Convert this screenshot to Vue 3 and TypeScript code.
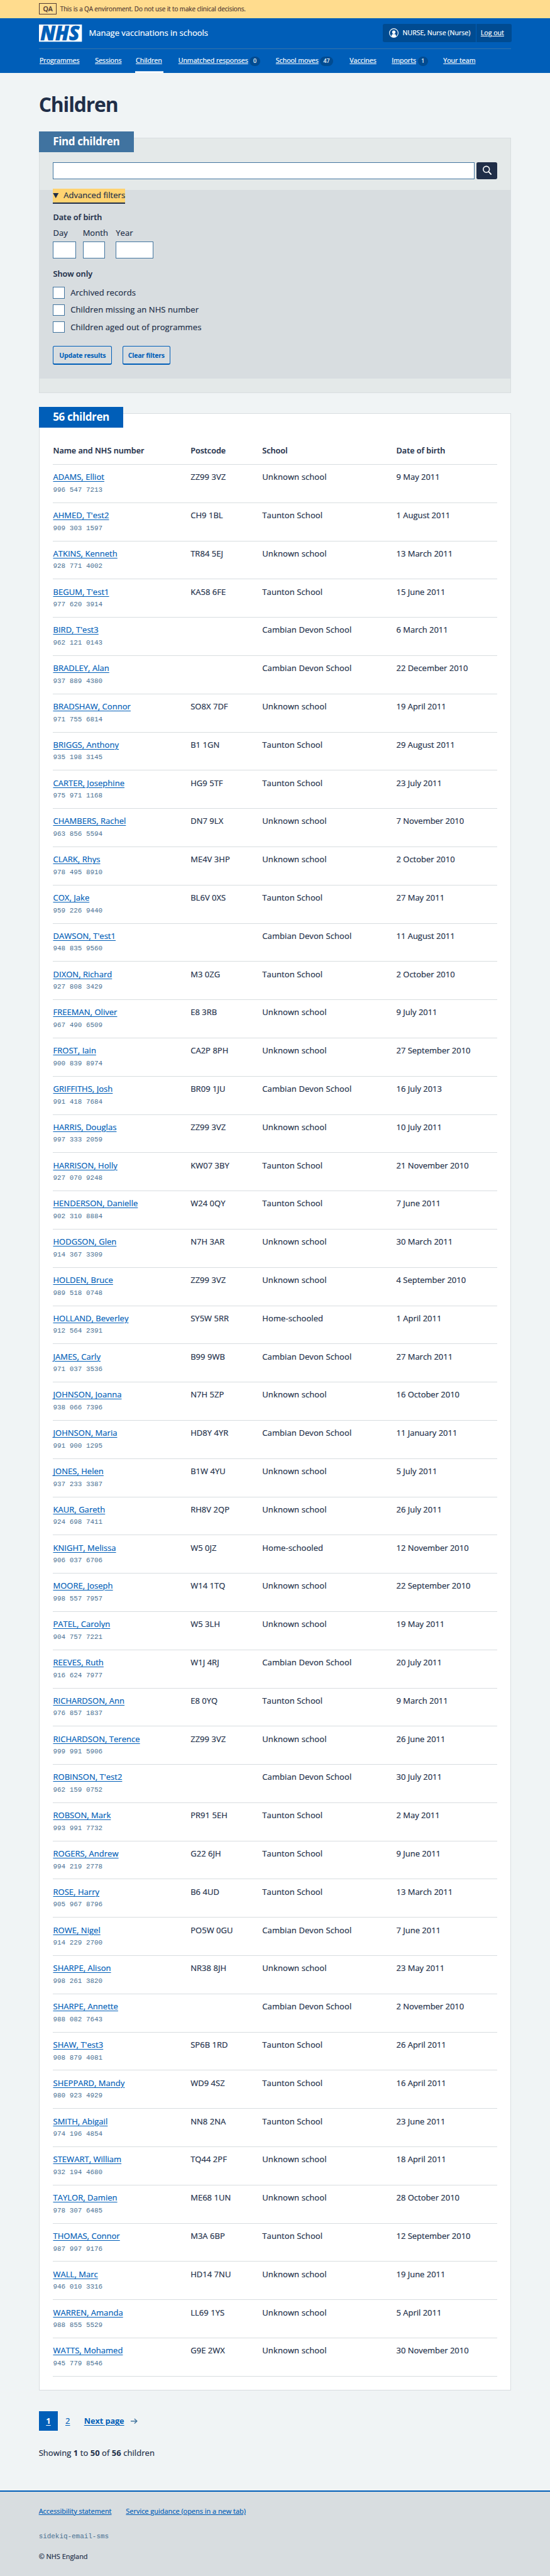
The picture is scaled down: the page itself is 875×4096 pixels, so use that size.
<script setup lang="ts">
interface NavItem { label: string; count?: number; active?: boolean }
interface Child { name: string; nhs: string; postcode: string; school: string; dob: string }

const nav: NavItem[] = [
  { label: 'Programmes' },
  { label: 'Sessions' },
  { label: 'Children', active: true },
  { label: 'Unmatched responses', count: 0 },
  { label: 'School moves', count: 47 },
  { label: 'Vaccines' },
  { label: 'Imports', count: 1 },
  { label: 'Your team' },
]

const filters = ['Archived records', 'Children missing an NHS number', 'Children aged out of programmes']
const columns = ['Name and NHS number', 'Postcode', 'School', 'Date of birth']

const schools: Record<string, string> = {
  U: 'Unknown school',
  T: 'Taunton School',
  C: 'Cambian Devon School',
  H: 'Home-schooled',
}

const records = `ADAMS, Elliot|996 547 7213|ZZ99 3VZ|U|9 May 2011
AHMED, T'est2|909 303 1597|CH9 1BL|T|1 August 2011
ATKINS, Kenneth|928 771 4002|TR84 5EJ|U|13 March 2011
BEGUM, T'est1|977 620 3914|KA58 6FE|T|15 June 2011
BIRD, T'est3|962 121 0143||C|6 March 2011
BRADLEY, Alan|937 889 4380||C|22 December 2010
BRADSHAW, Connor|971 755 6814|SO8X 7DF|U|19 April 2011
BRIGGS, Anthony|935 198 3145|B1 1GN|T|29 August 2011
CARTER, Josephine|975 971 1168|HG9 5TF|T|23 July 2011
CHAMBERS, Rachel|963 856 5594|DN7 9LX|U|7 November 2010
CLARK, Rhys|978 495 8910|ME4V 3HP|U|2 October 2010
COX, Jake|959 226 9440|BL6V 0XS|T|27 May 2011
DAWSON, T'est1|948 835 9560||C|11 August 2011
DIXON, Richard|927 808 3429|M3 0ZG|T|2 October 2010
FREEMAN, Oliver|967 490 6509|E8 3RB|U|9 July 2011
FROST, Iain|900 839 8974|CA2P 8PH|U|27 September 2010
GRIFFITHS, Josh|991 418 7684|BR09 1JU|C|16 July 2013
HARRIS, Douglas|997 333 2059|ZZ99 3VZ|U|10 July 2011
HARRISON, Holly|927 070 9248|KW07 3BY|T|21 November 2010
HENDERSON, Danielle|902 310 8884|W24 0QY|T|7 June 2011
HODGSON, Glen|914 367 3309|N7H 3AR|U|30 March 2011
HOLDEN, Bruce|989 518 0748|ZZ99 3VZ|U|4 September 2010
HOLLAND, Beverley|912 564 2391|SY5W 5RR|H|1 April 2011
JAMES, Carly|971 037 3536|B99 9WB|C|27 March 2011
JOHNSON, Joanna|938 066 7396|N7H 5ZP|U|16 October 2010
JOHNSON, Maria|991 900 1295|HD8Y 4YR|C|11 January 2011
JONES, Helen|937 233 3387|B1W 4YU|U|5 July 2011
KAUR, Gareth|924 698 7411|RH8V 2QP|U|26 July 2011
KNIGHT, Melissa|906 037 6706|W5 0JZ|H|12 November 2010
MOORE, Joseph|998 557 7957|W14 1TQ|U|22 September 2010
PATEL, Carolyn|904 757 7221|W5 3LH|U|19 May 2011
REEVES, Ruth|916 624 7977|W1J 4RJ|C|20 July 2011
RICHARDSON, Ann|976 857 1837|E8 0YQ|T|9 March 2011
RICHARDSON, Terence|999 991 5906|ZZ99 3VZ|U|26 June 2011
ROBINSON, T'est2|962 159 0752||C|30 July 2011
ROBSON, Mark|993 991 7732|PR91 5EH|T|2 May 2011
ROGERS, Andrew|994 219 2778|G22 6JH|T|9 June 2011
ROSE, Harry|905 967 8796|B6 4UD|T|13 March 2011
ROWE, Nigel|914 229 2700|PO5W 0GU|C|7 June 2011
SHARPE, Alison|998 261 3820|NR38 8JH|U|23 May 2011
SHARPE, Annette|988 082 7643||C|2 November 2010
SHAW, T'est3|908 879 4081|SP6B 1RD|T|26 April 2011
SHEPPARD, Mandy|980 923 4929|WD9 4SZ|T|16 April 2011
SMITH, Abigail|974 196 4854|NN8 2NA|T|23 June 2011
STEWART, William|932 194 4680|TQ44 2PF|U|18 April 2011
TAYLOR, Damien|978 307 6485|ME68 1UN|U|28 October 2010
THOMAS, Connor|987 997 9176|M3A 6BP|T|12 September 2010
WALL, Marc|946 010 3316|HD14 7NU|U|19 June 2011
WARREN, Amanda|988 855 5529|LL69 1YS|U|5 April 2011
WATTS, Mohamed|945 779 8546|G9E 2WX|U|30 November 2010`

const children: Child[] = records.split('\n').map((line) => {
  const [name, nhs, postcode, school, dob] = line.split('|')
  return { name, nhs, postcode, school: schools[school], dob }
})
</script>

<template>
  <div class="page">
    <div class="env">
      <div class="wrap env-row">
        <strong class="env-tag">QA</strong>
        <span>This is a QA environment. Do not use it to make clinical decisions.</span>
      </div>
    </div>

    <header class="header">
      <div class="wrap">
        <div class="brand">
          <svg class="logo" viewBox="0 0 100 40" role="img" aria-label="NHS">
            <rect width="100" height="40" fill="#fff" />
            <text class="logo-text" x="3.2" y="36.6" textLength="91" lengthAdjust="spacingAndGlyphs">NHS</text>
          </svg>
          <span class="service">Manage vaccinations in schools</span>
          <div class="account">
            <span class="account-user">
              <svg class="user-icon" viewBox="0 0 22 22" aria-hidden="true">
                <circle cx="11" cy="11" r="10.1" fill="none" stroke="#fff" stroke-width="1.7" />
                <rect x="7.1" y="5" width="7.8" height="8" rx="3.5" fill="#fff" />
                <path d="M6 19.6v-3.2q0-2.8 2.8-2.8h4.4q2.8 0 2.8 2.8v3.2q-5 2.4-10 0z" fill="#fff" />
              </svg>
              NURSE, Nurse (Nurse)
            </span>
            <a class="account-out" href="#">Log out</a>
          </div>
        </div>
        <nav class="nav">
          <div v-for="item in nav" :key="item.label" class="nav-item" :class="{ active: item.active }">
            <a href="#">{{ item.label }}</a>
            <span v-if="item.count !== undefined" class="badge">{{ item.count }}</span>
          </div>
        </nav>
      </div>
    </header>

    <main class="wrap">
      <h1>Children</h1>

      <section class="card find">
        <h2 class="tab tab-find">Find children</h2>
        <div class="search">
          <input class="search-input" type="text" aria-label="Search" />
          <button class="search-button" type="button" aria-label="Search">
            <svg viewBox="0 0 48 40" aria-hidden="true">
              <circle cx="23" cy="16.5" r="7.2" fill="none" stroke="#fff" stroke-width="2.3" />
              <path d="M28.2 21.9l5.6 5.9" fill="none" stroke="#fff" stroke-width="2.7" stroke-linecap="round" />
            </svg>
          </button>
        </div>
        <div class="panel">
          <div class="summary">
            <svg viewBox="0 0 14 12" aria-hidden="true"><path d="M.4 0h13.2L7 12z" fill="#202e48" /></svg>
            <span>Advanced filters</span>
          </div>
          <h3 class="legend legend-dob">Date of birth</h3>
          <div class="dates">
            <label>Day<input class="in-day" type="text" /></label>
            <label>Month<input class="in-month" type="text" /></label>
            <label>Year<input class="in-year" type="text" /></label>
          </div>
          <h3 class="legend legend-show">Show only</h3>
          <div class="checks">
            <label v-for="f in filters" :key="f" class="check"><span class="box"></span>{{ f }}</label>
          </div>
          <div class="buttons">
            <button class="btn btn-update" type="button">Update results</button>
            <button class="btn btn-clear" type="button">Clear filters</button>
          </div>
        </div>
      </section>

      <section class="card list">
        <h2 class="tab tab-list">56 children</h2>
        <div class="table" role="table">
          <div class="row head" role="row">
            <span v-for="c in columns" :key="c" role="columnheader">{{ c }}</span>
          </div>
          <div v-for="c in children" :key="c.nhs" class="row body" role="row">
            <div role="cell"><a href="#">{{ c.name }}</a><span class="nhs">{{ c.nhs }}</span></div>
            <div role="cell">{{ c.postcode }}</div>
            <div class="school" role="cell">{{ c.school }}</div>
            <div class="dob" role="cell">{{ c.dob }}</div>
          </div>
        </div>
      </section>

      <nav class="pages">
        <a class="page-link current" href="#">1</a>
        <a class="page-link" href="#">2</a>
        <a class="next" href="#">Next page</a>
        <svg class="arrow" viewBox="0 0 16 14" aria-hidden="true">
          <path d="M0 7h14M8.6 1.4L14.4 7l-5.8 5.6" fill="none" stroke="#41749e" stroke-width="2.1" />
        </svg>
      </nav>
      <p class="showing">Showing <b>1</b> to <b>50</b> of <b>56</b> children</p>
    </main>

    <footer class="footer">
      <div class="wrap">
        <div class="footer-links">
          <a href="#">Accessibility statement</a>
          <a href="#">Service guidance (opens in a new tab)</a>
        </div>
        <p class="mono">sidekiq-email-sms</p>
        <p class="copy">© NHS England</p>
      </div>
    </footer>
  </div>
</template>

<style>
/* 1rem is ten layout units */
html { font-size: 6.834px; background: #d8dde0; }
body { margin: 0; }
</style>

<style scoped>
.page {
  background: #f0f4f5;
  color: #202e48;
  font-family: "Open Sans", "Noto Sans", sans-serif;
  font-size: 1.9rem;
  line-height: 2.8rem;
  letter-spacing: 0.008rem;
  white-space: nowrap;
  -webkit-text-stroke-width: 0.2px;
}
.page *, .page *::before { box-sizing: border-box; }
a { color: #005eb8; text-decoration: underline; text-decoration-thickness: 1px; text-underline-offset: 0.13em; }
h1, h2, h3, p { margin: 0; }
h1, h2, b, .btn, .next, .current, .nhs, .mono { -webkit-text-stroke-width: 0; }
button, input { font: inherit; letter-spacing: inherit; padding: 0; margin: 0; }
.wrap { width: 110rem; margin: 0 auto; }

.env { background: #ffdc8e; color: #523a34; height: 4.2rem; }
.env-row { display: flex; align-items: center; gap: 0.8rem; height: 4.2rem; font-size: 1.45rem; letter-spacing: -0.012rem; }
.env-tag { width: 4.2rem; height: 2.6rem; line-height: 2.4rem; border: 1px solid #523a34; text-align: center; font-size: 1.55rem; font-weight: 600; }

.header { background: #005eb8; color: #fff; height: 12.8rem; letter-spacing: 0; }
.header a { color: #fff; }
.brand { display: flex; align-items: center; height: 7.2rem; border-bottom: 1px solid #3573a9; }
.logo { width: 10rem; height: 4rem; flex: none; overflow: visible; }
.logo-text { font-family: "Open Sans", sans-serif; font-size: 46px; font-weight: 800; font-style: italic; fill: #005eb8; stroke: #005eb8; stroke-width: 1; letter-spacing: 0; }
.service { margin-left: 1.7rem; padding-bottom: 0.2rem; }
.account { display: flex; margin-left: auto; height: 4.2rem; background: #004b91; border-radius: 0.4rem; font-size: 1.55rem; line-height: 4.2rem; margin-right: -0.1rem; }
.account-user { display: flex; align-items: center; width: 21.6rem; padding-left: 1.4rem; gap: 1rem; }
.account-out { width: 8.4rem; padding-left: 1.2rem; box-shadow: inset 1px 0 #005eb8; }
.user-icon { width: 2.2rem; height: 2.2rem; }

.nav { display: grid; grid-template-columns: 9.7rem 6.3rem 6.7rem 19.5rem 14rem 6.6rem 8.8rem 8.1rem; column-gap: 3.2rem; height: 5.6rem; font-size: 1.55rem; }
.nav-item { display: flex; align-items: center; padding: 0 0.2rem; gap: 0.4rem; }
.nav-item.active { box-shadow: inset 0 -0.4rem #fff; }
.badge { min-width: 2.4rem; height: 2.2rem; padding: 0 0.75rem; border-radius: 1.2rem; background: #004b91; font-size: 1.3rem; line-height: 2.2rem; text-align: center; }

h1 { margin: 4.35rem 0 4.85rem; height: 5.8rem; line-height: 5.8rem; font-size: 4.65rem; font-weight: 700; letter-spacing: -0.16rem; }

.card { border: 1px solid #d8dde0; display: flow-root; }
.tab { height: 4.8rem; line-height: 4.8rem; padding-left: 3.3rem; margin: -1.6rem 0 0 -1px; color: #fff; font-size: 2.5rem; font-weight: 700; letter-spacing: -0.06rem; }
.tab-find { width: 22.1rem; background: #4073a0; }
.tab-list { width: 19.7rem; background: #005eb8; }

.find { height: 59.4rem; background: #e4e9e9; }
.search { display: flex; gap: 0.4rem; height: 4rem; margin: 2.4rem 3.2rem 2.4rem 3.2rem; }
.search-input { flex: 1; min-width: 0; }
.search-input, .dates input { background: #fff; border: 1.4px solid #41749e; border-radius: 0; outline: none; }
.search-button { width: 4.8rem; height: 4rem; border: 0; border-radius: 0.4rem; background: #202e48; }
.search-button svg { display: block; width: 100%; height: 100%; }

.panel { height: 44rem; background: #d8dde0; padding: 0 3.2rem; display: flow-root; }
.summary { display: flex; align-items: center; width: 16.8rem; height: 3.4rem; margin-top: -0.2rem; background: #ffd371; border-bottom: 0.4rem solid #202e48; letter-spacing: 0.01rem; }
.summary svg { width: 1.4rem; height: 1.2rem; margin-right: 1.05rem; }
.legend { font-size: 1.85rem; font-weight: 600; letter-spacing: 0.004rem; line-height: 2.8rem; }
.legend-dob { margin-top: 1.85rem; }
.legend-show { margin-top: 2.28rem; }
.dates { display: grid; grid-template-columns: 6.9rem 7.7rem 8.7rem; margin-top: 0.8rem; }
.dates label { display: flex; flex-direction: column; gap: 0.54rem; }
.dates input { height: 4rem; }
.in-day { width: 5.3rem; }
.in-month { width: 5.2rem; }
.in-year { width: 8.7rem; }
.checks { margin-top: 0.93rem; letter-spacing: 0.017rem; }
.check { display: flex; align-items: center; height: 4rem; }
.box { width: 2.7rem; height: 2.7rem; margin-right: 1.35rem; background: #fff; border: 1.4px solid #41749e; }
.buttons { display: flex; gap: 2.4rem; margin-top: 2.39rem; }
.btn { height: 4.4rem; padding-top: 0.1rem; background: transparent; color: #005eb8; border: 1.4px solid #005eb8; border-bottom-width: 0.4rem; border-radius: 0.4rem; font-size: 1.55rem; font-weight: 700; letter-spacing: -0.04rem; }
.btn-update { width: 13.7rem; }
.btn-clear { width: 11.2rem; }

.list { margin-top: 4.8rem; height: 460.05rem; background: #fff; }
.table { margin: 3.85rem 3.2rem 0; }
.row { display: grid; grid-template-columns: 32rem 16.7rem 31.2rem 1fr; }
.head { height: 4.75rem; border-bottom: 0.2rem solid #d8dde0; font-size: 1.85rem; font-weight: 600; letter-spacing: 0.003rem; }
.body { height: 8.898rem; padding-top: 1.5rem; border-bottom: 1px solid #d8dde0; }
.school { letter-spacing: 0.018rem; }
.dob { letter-spacing: 0; }
.nhs, .mono { font-family: "Liberation Mono", monospace; font-size: 1.6rem; letter-spacing: 0; color: #4a7193; }
.nhs { display: block; margin-top: 0.22rem; }

.pages { display: flex; align-items: center; height: 4.5rem; margin-top: 4.85rem; }
.page-link { width: 4.5rem; height: 4.5rem; line-height: 4.5rem; text-align: center; }
.current { background: #005eb8; color: #fff; font-weight: 700; }
.next { margin-left: 1.55rem; width: 10.85rem; font-weight: 700; font-size: 1.85rem; letter-spacing: -0.002rem; }
.arrow { width: 1.6rem; height: 1.4rem; }
.showing { margin-top: 3.7rem; letter-spacing: 0.012rem; }
.showing b { font-weight: 700; letter-spacing: 0; }

.footer { margin-top: 7.3rem; height: 20.05rem; border-top: 0.4rem solid #005eb8; background: #d8dde0; font-size: 1.6rem; line-height: 2.4rem; display: flow-root; letter-spacing: 0; }
.footer-links { display: grid; grid-template-columns: 20.3rem 1fr; margin-top: 3.38rem; }
.mono { margin-top: 3.45rem; }
.copy { margin-top: 2.35rem; }
</style>
